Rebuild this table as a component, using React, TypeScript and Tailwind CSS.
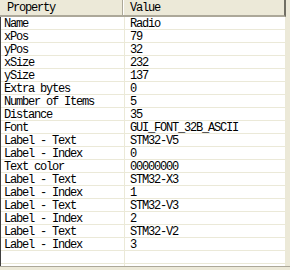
import React from "react";

const rows: [string, string][] = [
  ["Name", "Radio"],
  ["xPos", "79"],
  ["yPos", "32"],
  ["xSize", "232"],
  ["ySize", "137"],
  ["Extra bytes", "0"],
  ["Number of Items", "5"],
  ["Distance", "35"],
  ["Font", "GUI_FONT_32B_ASCII"],
  ["Label - Text", "STM32-V5"],
  ["Label - Index", "0"],
  ["Text color", "00000000"],
  ["Label - Text", "STM32-X3"],
  ["Label - Index", "1"],
  ["Label - Text", "STM32-V3"],
  ["Label - Index", "2"],
  ["Label - Text", "STM32-V2"],
  ["Label - Index", "3"],
  ["", ""],
];

export default function App() {
  return (
    <div className="w-[290px] h-[270px] bg-[#ECE9D8] overflow-hidden font-['Liberation_Mono',monospace] text-[12px] leading-[9px] tracking-[-1.2px] text-black">
      <div className="flex h-[266px]">
        {/* property grid */}
        <div className="w-[286px] flex flex-col bg-white">
          {/* header */}
          <div className="flex h-[17px] bg-[#ECE9D8] border-b-2 border-[#ACA899] border-r-2 border-r-[#716F64]">
            <div className="w-[123px] pl-[7px] pt-[4px] border-r border-[#ACA899]">Property</div>
            <div className="flex-1 pl-[6px] pt-[4px] border-l border-white">Value</div>
          </div>
          <div className="flex-1 flex flex-col border-l border-[#404040] border-r border-r-[#EBE9D8]">
            {rows.map(([k, v], i) => (
              <div key={i} className="flex h-[13px] border-b border-[#EBE9D8]">
                <div className="w-[124px] pl-[3px] pt-[3px] border-r border-[#EBE9D8] whitespace-nowrap">{k}</div>
                <div className="flex-1 pl-[5px] pt-[3px] whitespace-nowrap">{v}</div>
              </div>
            ))}
            <div className="flex-1 flex">
              <div className="w-[124px] border-r border-[#EBE9D8]" />
            </div>
          </div>
        </div>
        <div className="flex-1 bg-[#ECE9D8]" />
      </div>
      <div className="h-[1px] bg-[#ACA899]" />
    </div>
  );
}
